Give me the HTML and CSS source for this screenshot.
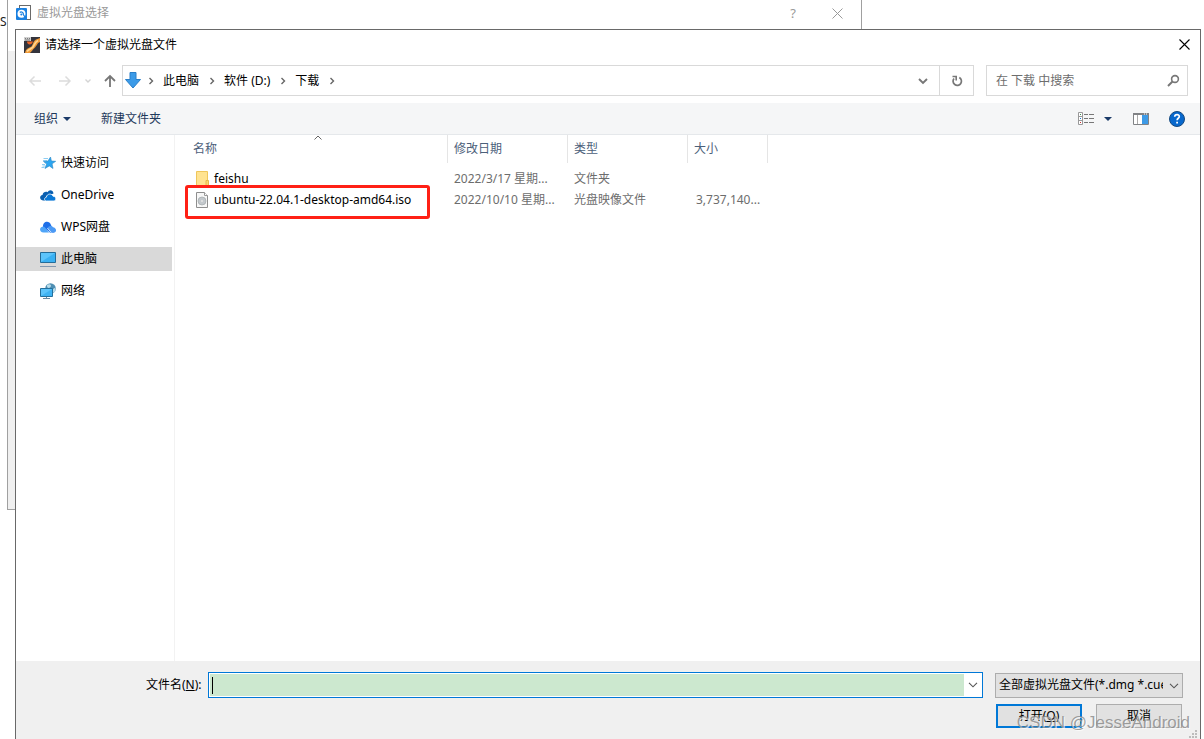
FILE: index.html
```html
<!DOCTYPE html>
<html lang="zh-CN">
<head>
<meta charset="utf-8">
<title>请选择一个虚拟光盘文件</title>
<link rel="stylesheet" href="styles.css">
</head>
<body>
<div class="desktop">
  <span class="desktop-text">S</span>

  <section class="window back-window">
    <header class="back-title">
      <svg class="icon" viewBox="0 0 16 16"><rect x="3.500" y=".5" width="11" height="14" fill="#fff" stroke="#6a6a6a"/><rect x="0" y="3" width="11" height="12" rx="1" fill="#1a80e0"/><circle cx="5.500" cy="8.800" r="4" fill="#fff"/><path d="M3.800 7.500c1.500-1.500 4 0 3.500 2l2 3" fill="none" stroke="#1a80e0" stroke-width="1.300"/><circle cx="5.300" cy="9.500" r="1" fill="#1a80e0"/></svg>
      <span class="back-name">虚拟光盘选择</span>
      <button class="plain back-help" aria-label="帮助">?</button>
      <button class="plain back-close" aria-label="关闭"><svg width="11" height="11" viewBox="0 0 11 11"><path d="M.5 .5l10 10M10.500 .5l-10 10" stroke="#999" fill="none"/></svg></button>
    </header>
  </section>

  <main class="window dialog">
    <header class="title-bar">
      <svg class="icon" viewBox="0 0 16 16"><rect width="16" height="16" fill="#34343c"/><path d="M1 16C2 11 5 11 7.500 9.500 9 8 9 4 12 2.500l4-1.500v4c-3 1-3 4-5.500 6S8 14.500 6 16z" fill="#f09a38"/><path d="M3 14.500c1.500-2.500 4-2 6-4.500 1.500-2.500 2-5 5-6.500" stroke="#ffd692" stroke-width="1.800" fill="none"/><path d="M3 4.500c0 4 5 4 6 0" fill="#ea6325"/><path d="M0 0h7v4H0z" fill="#d0d0d0"/><path d="M1 1.500h1m1 0h1m1 0h1M1 3h5" stroke="#666" stroke-width=".8"/></svg>
      <span class="title-name">请选择一个虚拟光盘文件</span>
      <button class="plain" aria-label="关闭"><svg width="11" height="11" viewBox="0 0 11 11"><path d="M.5 .5l10 10M10.500 .5l-10 10" stroke="#000" stroke-width="1.100" fill="none"/></svg></button>
    </header>

    <nav class="nav-bar">
      <div class="history">
        <button class="plain" aria-label="后退"><svg width="14" height="12" viewBox="0 0 14 12"><path d="M13 6H2M6.500 1.500L2 6l4.500 4.500" stroke="#dcdcdc" stroke-width="1.500" fill="none"/></svg></button>
        <button class="plain" aria-label="前进"><svg width="14" height="12" viewBox="0 0 14 12"><path d="M1 6h11M7.500 1.500L12 6l-4.500 4.500" stroke="#dcdcdc" stroke-width="1.500" fill="none"/></svg></button>
        <button class="plain" aria-label="最近浏览的位置"><svg width="8" height="6" viewBox="0 0 8 6"><path d="M1.500 1.500L4 4l2.500-2.500" stroke="#d4d4d4" stroke-width="1.400" fill="none"/></svg></button>
        <button class="plain" aria-label="上移"><svg width="12" height="14" viewBox="0 0 12 14"><path d="M6 13V2.500M1 7l5-5 5 5" stroke="#777" stroke-width="1.800" fill="none"/></svg></button>
      </div>
      <div class="address">
        <svg class="download" width="16" height="17" viewBox="0 0 16 17"><path d="M5 .5h6v7h4.500L8 16 .5 7.500H5z" fill="#3c9be8" stroke="#2a7fc9"/></svg>
        <svg class="crumb-arrow" viewBox="0 0 6 8"><path d="M1.500 1l3 3-3 3"/></svg>
        <a class="crumb" href="#pc">此电脑</a>
        <svg class="crumb-arrow" viewBox="0 0 6 8"><path d="M1.500 1l3 3-3 3"/></svg>
        <a class="crumb" href="#d">软件 (D:)</a>
        <svg class="crumb-arrow" viewBox="0 0 6 8"><path d="M1.500 1l3 3-3 3"/></svg>
        <a class="crumb" href="#downloads">下载</a>
        <svg class="crumb-arrow" viewBox="0 0 6 8"><path d="M1.500 1l3 3-3 3"/></svg>
        <button class="plain address-drop" aria-label="以前的位置"><svg width="10" height="8" viewBox="0 0 10 8"><path d="M1 2l4 4 4-4" stroke="#777" stroke-width="1.900" fill="none"/></svg></button>
        <button class="plain refresh" aria-label="刷新"><svg width="12" height="12" viewBox="0 0 12 12"><path d="M8.300 2.500a4.200 4.200 0 1 1-5.300 1" stroke="#777" stroke-width="1.700" fill="none"/><path d="M1.500 1.500H5.200v4" stroke="#777" stroke-width="1.600" fill="none"/></svg></button>
      </div>
      <label class="search">
        <input type="search" placeholder="在 下载 中搜索" aria-label="在 下载 中搜索">
        <svg width="13" height="13" viewBox="0 0 13 13"><circle cx="8" cy="5" r="3.400" stroke="#777" stroke-width="1.600" fill="none"/><path d="M5.500 7.500L1 12" stroke="#777" stroke-width="1.900"/></svg>
      </label>
    </nav>

    <div class="toolbar">
      <button class="plain tool organize">组织 <svg width="8" height="4" viewBox="0 0 8 4"><path d="M0 0h8L4 4z" fill="#1b3a68"/></svg></button>
      <button class="plain tool">新建文件夹</button>
      <span class="spacer"></span>
      <button class="plain view" aria-label="更改视图">
        <svg width="17" height="13" viewBox="0 0 17 13"><path d="M.5 .5h4v12h-4zM.5 4.500h4M.5 8.500h4" fill="#fff" stroke="#999"/><path d="M6 2.500h4m1 0h5M6 6.500h4m1 0h5M6 10.500h4m1 0h5" stroke="#777"/><path d="M2 2.500h1" stroke="#3a8f50"/><path d="M2 6.500h1" stroke="#1479d7"/><path d="M2 10.500h1" stroke="#d03030"/></svg>
        <svg width="8" height="4" viewBox="0 0 8 4"><path d="M0 0h8L4 4z" fill="#1b3a68"/></svg>
      </button>
      <button class="plain" aria-label="预览窗格"><svg width="16" height="12" viewBox="0 0 16 12"><path d="M.5 .5h15v11H.5z" fill="#fff" stroke="#808285"/><path d="M0 1h16" stroke="#808285" stroke-width="2"/><path d="M4.500 2v9" stroke="#aaa"/><path d="M9 2h6v9H9z" fill="#3d9ae6"/><path d="M11 1h1m1 0h1" stroke="#fff"/></svg></button>
      <button class="plain" aria-label="获取帮助"><svg width="16" height="16" viewBox="0 0 16 16"><circle cx="8" cy="8" r="7.500" fill="#0868cd" stroke="#164a80"/><path d="M5.700 5.800c.1-3 4.700-2.900 4.600-.2 0 1.700-2.200 1.600-2.200 3.600" fill="none" stroke="#fff" stroke-width="1.700"/><path d="M7.200 10.700h1.800v1.700H7.200z" fill="#fff"/></svg></button>
    </div>

    <div class="content">
      <aside class="sidebar">
        <a class="place" href="#quick"><svg class="icon" viewBox="0 0 16 16"><path d="M3.500 3.500H8M2 9.500h3M1.500 12.500h3M3 5.500h4M2.500 11h3" stroke="#8ecdf2"/><path d="M10.500 2l.9 4 4.300.3-3.600 2.500.9 4.700-3.700-2.600-4.300 2.600 1.700-4.400L3.500 6.500l4.400-.4z" fill="#2ba5f0" stroke="#2a86c4" stroke-width=".6"/></svg>快速访问</a>
        <a class="place" href="#onedrive"><svg class="icon" viewBox="0 0 16 16"><path d="M3 13.500C-.5 13-1 8.500 2.500 8 3 5 6 4 7.500 5.200 9 2.200 13 2.500 13.500 6.500L7 9l-2 4.500z" fill="#0a5fb0"/><path d="M6.500 14C3.800 13.800 4 10.500 6.300 10.200 7 6.300 11.800 6.200 13 9.200 16.500 9.200 16.500 13.800 14 14z" fill="#0a78d6" stroke="#fff" stroke-width=".8"/></svg>OneDrive</a>
        <a class="place" href="#wps"><svg class="icon" viewBox="0 0 16 16"><path d="M3 8C2.500 2 9.500 1 11 6l3.500 7.500H10z" fill="#1e6fe8"/><path d="M3.500 13.500C-1 13.500-1 8 3 7.500c3 0 4 6 7 6z" fill="#4fa5f8"/><path d="M10 13.500L7.500 9c1.500-2.500 4.500-2.500 5.500-.8 4 .6 3.800 5.300 1 5.300z" fill="#4b9af5"/><path d="M7.300 9l4 4.500" stroke="#fff" stroke-width=".7"/></svg>WPS网盘</a>
        <a class="place selected" href="#pc"><svg class="icon" viewBox="0 0 16 16"><path d="M.5 1.500h15v10H.5z" fill="#5cc4fb" stroke="#246c99"/><path d="M1 11L15 2v9z" fill="#159be9" opacity=".5"/><path d="M0 15.500h16" stroke="#8198b0"/></svg>此电脑</a>
        <a class="place" href="#network"><svg class="icon" viewBox="0 0 16 16"><circle cx="10.500" cy="5.500" r="5.300" fill="#4f8fb3"/><path d="M7 2c3-2 5 0 3.500 2s-4 1-3.500-2zM13 6l2.500-1.500-.5 4-2 1.500z" fill="#b9dcea"/><path d="M.5 5.500h12v8H.5z" fill="#5cc4fb" stroke="#24709d"/><path d="M1 13L12 6v7z" fill="#159be9" opacity=".4"/><path d="M6.500 14v1M3 15.500h7" stroke="#6b8ba2"/></svg>网络</a>
      </aside>

      <div class="files">
        <table class="file-table">
          <thead>
            <tr><th class="col-name">名称<svg class="sort" width="8" height="5" viewBox="0 0 8 5"><path d="M.5 4.500L4 1l3.500 3.500" stroke="#666" fill="none"/></svg></th><th class="col-date">修改日期</th><th class="col-type">类型</th><th class="col-size">大小</th><th class="col-rest"></th></tr>
          </thead>
          <tbody>
            <tr><td><span class="file"><svg class="icon" viewBox="0 0 16 16"><path d="M1.500 .5h11v14.500H1.500z" fill="#ffe391" stroke="#efc65b"/><path d="M11 9.500h2.500V15H11z" fill="#f8d775" stroke="#e8bb48"/></svg>feishu</span></td><td>2022/3/17 星期...</td><td>文件夹</td><td></td><td></td></tr>
            <tr><td><span class="file"><svg class="icon" viewBox="0 0 16 16"><path d="M1.500 .5h8l3 3v12h-11z" fill="#f7f7f7" stroke="#8e8e8e"/><path d="M9.500 .5v3h3" fill="#fff" stroke="#999"/><circle cx="7" cy="9" r="4" fill="#c3c8cc" stroke="#a5aaae" stroke-width=".7"/><circle cx="7" cy="9" r="1" fill="#e4e4e4"/></svg>ubuntu-22.04.1-desktop-amd64.iso</span></td><td>2022/10/10 星期...</td><td>光盘映像文件</td><td class="size">3,737,140...</td><td></td></tr>
          </tbody>
        </table>
        <div class="highlight"></div>
      </div>
    </div>

    <footer class="footer">
      <div class="name-row">
        <label class="name-label" for="filename">文件名(<u>N</u>):</label>
        <div class="combo">
          <div class="field"><span class="caret"></span><input id="filename" type="text"></div>
          <button class="plain combo-drop" aria-label="展开"><svg width="10" height="6" viewBox="0 0 10 6"><path d="M1 .8l4 4 4-4" stroke="#555" stroke-width="1.100" fill="none"/></svg></button>
        </div>
        <div class="filter">
          <select aria-label="文件类型"><option>全部虚拟光盘文件(*.dmg *.cue *.iso)</option></select>
          <svg width="10" height="6" viewBox="0 0 10 6"><path d="M1 .8l4 4 4-4" stroke="#555" stroke-width="1.100" fill="none"/></svg>
        </div>
      </div>
      <div class="actions">
        <button class="action primary">打开(<u>O</u>)</button>
        <button class="action">取消</button>
      </div>
      <svg class="grip" width="9" height="9" viewBox="0 0 9 9"><path d="M6 0h2v2H6zM3 3h2v2H3zM6 3h2v2H6zM0 6h2v2H0zM3 6h2v2H3zM6 6h2v2H6z" fill="#bcbcbc"/></svg>
    </footer>
  </main>
  <span class="watermark">CSDN @JesseAndroid</span>
</div>
</body>
</html>
```

FILE: styles.css
```css
* { box-sizing: border-box; }

body {
  margin: 0;
  background: #fff;
  color: #000;
  font: 12px/16px "Noto Sans", "Noto Sans CJK SC", sans-serif;
}

input, select, button { font: inherit; color: inherit; }
a { color: inherit; text-decoration: none; }
svg { display: block; flex: none; }

.plain {
  display: flex;
  align-items: center;
  border: 0;
  padding: 0;
  background: none;
}

.icon { width: 16px; height: 16px; }
.spacer { flex: 1; }

.desktop { position: relative; height: 100vh; overflow: hidden; }
.desktop-text { position: absolute; left: 0; top: 14px; color: #222; }
.window { position: absolute; }

.back-window {
  left: 7px;
  top: -1px;
  width: 855px;
  height: 511px;
  border: 1px solid #a0a0a0;
  background: #f0f0f0;
}
.back-title {
  display: flex;
  align-items: flex-start;
  height: 51px;
  padding: 5px 18px 0 8px;
  background: #fff;
  color: #999;
}
.back-name { flex: 1; margin-left: 5px; }
.back-help { margin-right: 36px; font-size: 13px; }
.back-close { height: 16px; }

.dialog {
  inset: 29px 3px 0 15px;
  display: flex;
  flex-direction: column;
  border: 1px solid #696969;
  border-bottom: 0;
  background: #fff;
}

.title-bar {
  display: flex;
  align-items: center;
  height: 29px;
  padding: 0 10px 0 8px;
}
.title-name { flex: 1; margin-left: 5px; }

.nav-bar {
  display: flex;
  height: 44px;
  padding: 6px 12px 7px;
}
.history { display: flex; align-items: center; width: 94px; gap: 16px; }
.history button:nth-child(3) { margin: 0 -4px; }
.address {
  display: flex;
  flex: 1;
  align-items: center;
  border: 1px solid #d9d9d9;
}
.download { margin: 0 7px 0 2px; }
.crumb { margin: 0 10px 0 9px; }
.crumb-arrow { width: 6px; height: 8px; fill: none; stroke: #666; stroke-width: 1.4; }
.address-drop { margin: 0 11px 0 auto; }
.refresh {
  align-self: stretch;
  justify-content: center;
  width: 34px;
  border-left: 1px solid #d9d9d9;
}
.search {
  display: flex;
  align-items: center;
  width: 202px;
  margin-left: 12px;
  padding: 0 7px 0 9px;
  border: 1px solid #d9d9d9;
}
.search input {
  flex: 1;
  min-width: 0;
  border: 0;
  padding: 0;
  outline: 0;
  appearance: none;
  background: none;
}
.search input::placeholder { color: #6d6d6d; opacity: 1; }

.toolbar {
  display: flex;
  align-items: center;
  height: 32px;
  padding: 0 15px 0 18px;
  border-bottom: 1px solid #e5e8eb;
  background: #f5f6f7;
}
.tool { color: #1e395b; }
.organize { gap: 5px; margin-right: 30px; }
.view { gap: 9px; margin-right: 21px; }
.view + button { margin-right: 20px; }

.content { display: flex; flex: 1; min-height: 0; }
.sidebar {
  display: flex;
  flex-direction: column;
  gap: 8px;
  width: 159px;
  padding: 16px 2px 0 0;
  border-right: 1px solid #f2f2f2;
}
.place {
  display: flex;
  align-items: center;
  gap: 5px;
  height: 24px;
  padding-left: 24px;
}
.selected { background: #d9d9d9; }

.files { position: relative; flex: 1; padding-left: 12px; }
.file-table {
  width: 100%;
  border-collapse: separate;
  border-spacing: 0;
  table-layout: fixed;
  color: #6d6d6d;
}
.file-table th {
  position: relative;
  height: 28px;
  padding: 0 6px;
  border-right: 1px solid #e5e5e5;
  color: #4c607a;
  font-weight: 400;
  text-align: left;
}
.file-table .col-rest { border: 0; }
.col-name { width: 261px; }
.col-date, .col-type { width: 120px; }
.col-size { width: 80px; }
.sort { position: absolute; left: 127px; top: 0; }
.file-table td { height: 21px; padding: 0 6px; white-space: nowrap; }
.file-table tbody::before { content: ""; display: block; height: 5px; }
.file-table .size { padding-left: 8px; }
.file { display: flex; align-items: center; gap: 3px; padding-left: 2px; color: #000; }
.highlight {
  position: absolute;
  left: 10px;
  top: 50px;
  width: 245px;
  height: 34px;
  border: 3px solid #ff2015;
  border-radius: 3px;
}

.footer { position: relative; height: 78px; padding: 11px 17px 0 130px; background: #f0f0f0; }
.name-row { display: flex; align-items: center; }
.name-label { width: 62px; white-space: nowrap; }
.combo {
  display: flex;
  flex: 1;
  height: 26px;
  padding: 1px;
  border: 1px solid #0078d7;
  background: #fff;
}
.field { display: flex; flex: 1; align-items: center; padding-left: 2px; background: #cce8cf; }
.caret { width: 1px; height: 17px; background: #000; }
.field input { flex: 1; min-width: 0; border: 0; padding: 0; outline: 0; background: none; }
.combo-drop { justify-content: center; width: 17px; }
.filter { position: relative; width: 188px; margin-left: 12px; }
.filter select {
  display: block;
  width: 100%;
  height: 25px;
  padding: 0 19px 0 3px;
  border: 1px solid #adadad;
  border-radius: 0;
  appearance: none;
  background: #e1e1e1;
}
.filter svg { position: absolute; right: 4px; top: 10px; pointer-events: none; }
.actions { display: flex; justify-content: flex-end; gap: 14px; padding: 6px 1px 0 0; }
.action {
  width: 86px;
  height: 24px;
  padding: 0;
  border: 1px solid #adadad;
  background: #e1e1e1;
}
.primary { border: 2px solid #0078d7; }
.grip { position: absolute; right: 2px; bottom: 0; }

.watermark {
  position: absolute;
  right: 14px;
  bottom: 6px;
  color: rgba(130, 130, 130, .75);
  font: 17px/20px "Liberation Sans", sans-serif;
  text-shadow: 1px 1px 0 rgba(255, 255, 255, .7);
  pointer-events: none;
}
```
